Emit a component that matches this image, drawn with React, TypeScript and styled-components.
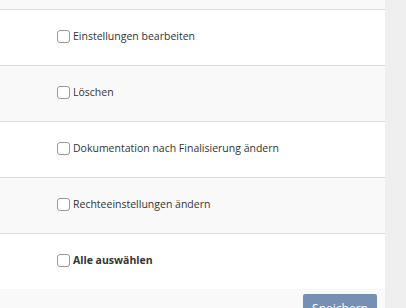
import React from "react";
import styled, { createGlobalStyle } from "styled-components";

const Global = createGlobalStyle`
  html, body { margin: 0; padding: 0; background: #f9f9f9; }
  body { font-family: "Open Sans", "Liberation Sans", sans-serif; }
`;

const Page = styled.div`
  display: flex;
  width: 406px;
  height: 308px;
  overflow: hidden;
`;

const Main = styled.div`
  width: 385px;
  display: flex;
  flex-direction: column;
  background: #f9f9f9;
`;

const Side = styled.div`
  flex: 1;
  background: #efefef;
`;

const TopStrip = styled.div`
  height: 9px;
  flex-shrink: 0;
  background: #f9f9f9;
`;

const Row = styled.div<{ $alt?: boolean }>`
  height: 55px;
  box-sizing: border-box;
  height: 56px;
  padding-bottom: 3px;
  flex-shrink: 0;
  border-top: 1px solid #dddddd;
  background: ${(p) => (p.$alt ? "#f9f9f9" : "#ffffff")};
  display: flex;
  align-items: center;
  padding-left: 57px;
`;

const Label = styled.label<{ $bold?: boolean }>`
  display: flex;
  align-items: center;
  gap: 3px;
  font-size: 10.5px;
  color: #333;
  font-weight: ${(p) => (p.$bold ? 700 : 400)};
  cursor: pointer;
`;

const Box = styled.input`
  appearance: none;
  margin: 0;
  width: 13px;
  height: 13px;
  border: 1px solid #999;
  border-radius: 3px;
  background: #fff;
  box-sizing: border-box;
`;

const Footer = styled.div`
  flex: 1;
  display: flex;
  justify-content: flex-end;
  align-items: flex-start;
  padding: 5px 8px 0 0;
`;

const SaveButton = styled.button`
  flex-shrink: 0;
  width: 74px;
  height: 30px;
  border: none;
  border-radius: 2px;
  background: #7590b3;
  color: #fff;
  font-family: "Open Sans", "Liberation Sans", sans-serif;
  font-size: 12px;
  padding: 0;
  line-height: 28px;
`;

const items: { text: string; bold?: boolean }[] = [
  { text: "Einstellungen bearbeiten" },
  { text: "Löschen" },
  { text: "Dokumentation nach Finalisierung ändern" },
  { text: "Rechteeinstellungen ändern" },
  { text: "Alle auswählen", bold: true },
];

export default function App() {
  return (
    <>
      <Global />
      <Page>
        <Main>
          <TopStrip />
          {items.map((it, i) => (
            <Row key={it.text} $alt={i % 2 === 1}>
              <Label $bold={it.bold}>
                <Box type="checkbox" />
                {it.text}
              </Label>
            </Row>
          ))}
          <Footer>
            <SaveButton>Speichern</SaveButton>
          </Footer>
        </Main>
        <Side />
      </Page>
    </>
  );
}
